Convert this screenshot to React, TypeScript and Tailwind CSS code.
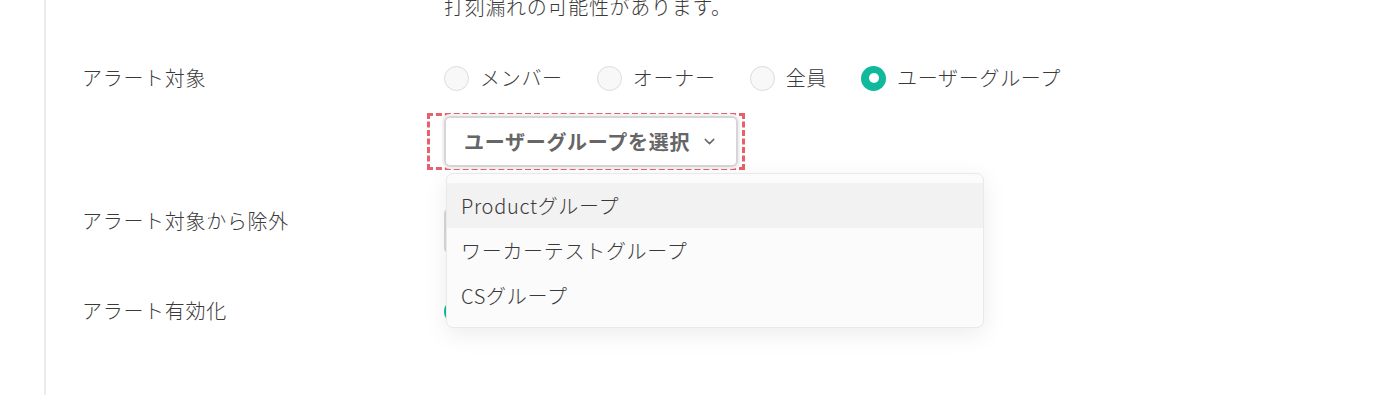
import { ChevronDown } from "lucide-react"

const FONT = { fontFamily: '"Noto Sans CJK JP", "Noto Sans", sans-serif' }

function Radio({ label, checked = false }: { label: string; checked?: boolean }) {
  return (
    <label className="flex items-center gap-[11px]">
      {checked ? (
        <span className="flex h-[25px] w-[25px] items-center justify-center rounded-full bg-[#10b99b]">
          <span className="h-[10px] w-[10px] rounded-full bg-white" />
        </span>
      ) : (
        <span className="h-[25px] w-[25px] rounded-full border-[1.5px] border-[#dcdcdc] bg-[#f8f8f8]" />
      )}
      <span>{label}</span>
    </label>
  )
}

const groups = ["Productグループ", "ワーカーテストグループ", "CSグループ"]

export default function App() {
  return (
    <div
      className="relative h-[395px] w-full overflow-hidden bg-white text-[20px] font-light leading-[30px] tracking-[0.7px] text-[#3a3a3a]"
      style={FONT}>
      <div className="ml-[44px] flex h-[395px] flex-col border-l-2 border-[#ececec] pl-[36px]">
        {/* note carried over from the previous row */}
        <div className="-mt-[8px] flex">
          <div className="w-[362px]" />
          <p>打刻漏れの可能性があります。</p>
        </div>

        {/* alert target */}
        <div className="mt-[41px] flex">
          <div className="w-[362px]">アラート対象</div>
          <div className="flex flex-col">
            <div className="flex h-[30px] items-center gap-[34px]">
              <Radio label="メンバー" />
              <Radio label="オーナー" />
              <Radio label="全員" />
              <Radio label="ユーザーグループ" checked />
            </div>
            <div className="relative mt-[20px] -ml-[17px]">
              <div className="inline-flex border-[3px] border-dashed border-[#e8606c] pl-[14px] pr-[4px]">
                <button className="flex h-[51px] w-[294px] items-center justify-between rounded-[6px] border-2 border-[#d6d6d6] pl-[18px] pr-[18px] font-bold text-[#666] shadow-[0_0_0_2px_#f1f1f1]">
                  <span>ユーザーグループを選択</span>
                  <ChevronDown size={17} strokeWidth={2} className="text-[#666]" />
                </button>
              </div>
            </div>
          </div>
        </div>

        {/* exclusion */}
        <div className="mt-[36px] flex items-start">
          <div className="w-[362px]">アラート対象から除外</div>
          <div className="mt-[2px] h-[46px] w-[300px] rounded-[6px] border-2 border-[#d8d8d8]" />
        </div>

        {/* enable */}
        <div className="mt-[42px] flex items-center">
          <div className="w-[362px]">アラート有効化</div>
          <Radio label="有効" checked />
        </div>
      </div>

      {/* open dropdown */}
      <ul className="absolute left-[446px] top-[173px] w-[538px] rounded-[7px] border border-[#e9e9e9] bg-[#fbfbfb] py-[9px] shadow-[0_6px_24px_rgba(0,0,0,0.08)]">
        {groups.map((g, i) => (
          <li
            key={g}
            className={`flex h-[45px] items-center px-[14px] ${
              i === 0 ? "bg-[#f2f2f2]" : ""
            }`}>
            {g}
          </li>
        ))}
      </ul>
    </div>
  )
}
